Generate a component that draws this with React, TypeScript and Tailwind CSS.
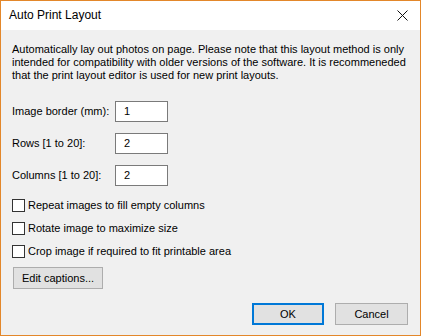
import React from 'react'

const font = { fontFamily: '"Liberation Sans", Arial, sans-serif' }

const NumberField = ({ label, value }: { label: string; value: string }) => (
  <div className="flex h-[21px] items-center whitespace-nowrap">
    <span className="w-[103px]">{label}</span>
    <div className="flex h-[21px] w-[53px] items-center border border-[#7a7a7a] bg-white pl-[8px]">
      {value}
    </div>
  </div>
)

const Check = ({ label }: { label: string }) => (
  <div className="flex h-[13px] items-center gap-[3px] whitespace-nowrap">
    <span className="box-border h-[13px] w-[13px] border border-[#333] bg-white" />
    <span>{label}</span>
  </div>
)

export default function App() {
  return (
    <div
      className="flex h-[336px] w-[421px] flex-col overflow-hidden border border-[#e3872a] bg-[#f0f0f0] text-[11px] leading-[13px] text-black"
      style={font}
    >
      <div className="flex h-[29px] shrink-0 items-center justify-between bg-white pl-[8px] pr-[10px]">
        <span className="text-[12px]">Auto Print Layout</span>
        <svg width="11" height="11" viewBox="0 0 11 11" className="mr-[2px]">
          <path d="M0.5 0.5 L10.5 10.5 M10.5 0.5 L0.5 10.5" stroke="#111" strokeWidth="1" />
        </svg>
      </div>
      <div className="flex flex-1 flex-col px-[11px] pt-[13px]">
        <p className="whitespace-nowrap leading-[13px]">
          Automatically lay out photos on page. Please note that this layout method is only
          <br />
          intended for compatibility with older versions of the software. It is recommeneded
          <br />
          that the print layout editor is used for new print layouts.
        </p>
        <div className="mt-[19px] flex flex-col gap-[11px]">
          <NumberField label="Image border (mm):" value="1" />
          <NumberField label="Rows [1 to 20]:" value="2" />
          <NumberField label="Columns [1 to 20]:" value="2" />
        </div>
        <div className="mt-[13px] flex flex-col gap-[10px]">
          <Check label="Repeat images to fill empty columns" />
          <Check label="Rotate image to maximize size" />
          <Check label="Crop image if required to fit printable area" />
        </div>
        <button className="ml-[1px] mt-[9px] h-[22px] w-[90px] border border-[#adadad] bg-[#e1e1e1] text-[11px]">
          Edit captions...
        </button>
        <div className="mt-[14px] flex justify-end gap-[11px] pr-[1px]">
          <button className="h-[22px] w-[72px] border-2 border-[#0078d7] bg-[#e1e1e1] text-[11px]">
            OK
          </button>
          <button className="h-[22px] w-[73px] border border-[#adadad] bg-[#e1e1e1] text-[11px]">
            Cancel
          </button>
        </div>
      </div>
    </div>
  )
}
